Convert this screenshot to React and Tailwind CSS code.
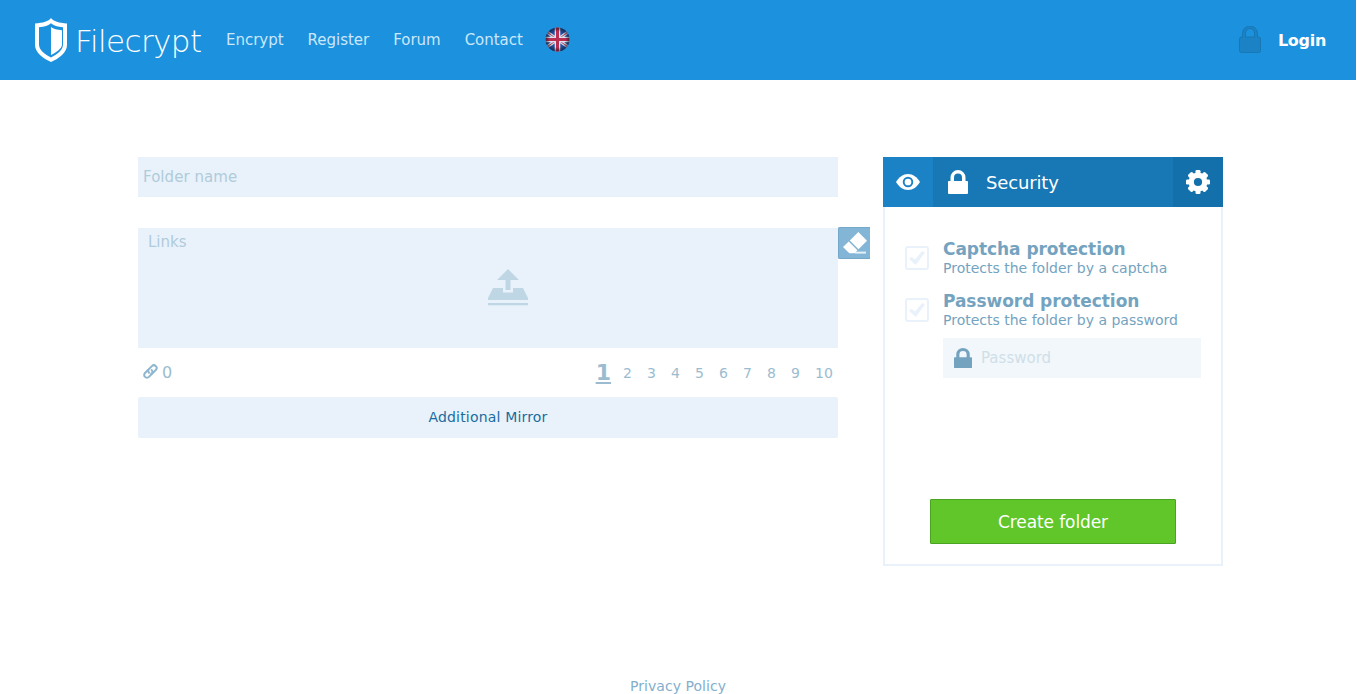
const LockIcon = ({ className }) => (
  <svg className={className} viewBox="0 0 20 24" fill="currentColor" preserveAspectRatio="none">
    <path d="M2.500 11V7.500a7.500 7.500 0 0 1 15 0V11H19.200a.8 .8 0 0 1 .8 .8V23a1 1 0 0 1-1 1H1a1 1 0 0 1-1-1V11.800a.8 .8 0 0 1 .8-.8zM6 11h8V7.500a4 4 0 0 0-8 0z" />
  </svg>
);

const ShieldLogo = () => (
  <svg className="h-[44px] w-8 shrink-0" viewBox="0 0 32 44" fill="#fff">
    <path
      fillRule="evenodd"
      d="M16 0C18.500 3.300 24 5 32 5.400V27C32 34.500 24 40.500 16 44C8 40.500 0 34.500 0 27V5.400C8 5 13.500 3.300 16 0ZM16 5.200C13.500 7.600 9.500 8.900 4 9.200V26.500C4 32 10 36.500 16 39.500C22 36.500 28 32 28 26.500V9.200C22.500 8.900 18.500 7.600 16 5.200Z"
    />
    <path d="M16 9C18.500 10.800 22 11.900 27 12.200V26.500C27 30.500 21.500 34.300 16 37Z" />
  </svg>
);

const Flag = () => (
  <svg className="h-[25px] w-[25px]" viewBox="0 0 25 25">
    <defs>
      <clipPath id="flag-disc"><circle cx="12.500" cy="12.500" r="12" /></clipPath>
      <radialGradient id="flag-shade" r=".52">
        <stop offset=".6" stopColor="#000" stopOpacity="0" />
        <stop offset="1" stopColor="#102040" stopOpacity=".75" />
      </radialGradient>
    </defs>
    <g clipPath="url(#flag-disc)">
      <path fill="#2350a0" d="M0 0h25v25H0z" />
      <path stroke="#cdd6e8" strokeWidth="3.200" d="M-1 3L26 22M-1 22L26 3" />
      <path stroke="#c23a55" strokeWidth="1" d="M-1 3L26 22M-1 22L26 3" />
      <path stroke="#dfe3ef" strokeWidth="5.600" d="M12.500 0v25M0 12.500h25" />
      <path stroke="#b92e50" strokeWidth="3" d="M12.500 0v25M0 12.500h25" />
      <path fill="url(#flag-shade)" d="M0 0h25v25H0z" />
    </g>
  </svg>
);

const Eye = () => (
  <svg className="h-4 w-6" viewBox="0 0 24 16" fill="none">
    <path fill="#fff" d="M0 8C3 3 7 0 12 0s9 3 12 8c-3 5-7 8-12 8S3 13 0 8z" />
    <circle cx="12" cy="8" r="4.300" stroke="#1b82c5" strokeWidth="1.900" />
  </svg>
);

const Gear = () => (
  <svg className="h-6 w-6" viewBox="-12 -12 24 24">
    <g fill="#fff">
      <rect x="-2.500" y="-12" width="5" height="24" rx="1.300" />
      <rect x="-12" y="-2.500" width="24" height="5" rx="1.300" />
      <rect x="-3" y="-12" width="6" height="24" rx="1.500" transform="rotate(45)" />
      <rect x="-3" y="-12" width="6" height="24" rx="1.500" transform="rotate(-45)" />
      <circle r="9.400" />
    </g>
    <circle r="4.100" fill="#1470ab" />
  </svg>
);

const Upload = () => (
  <svg className="h-[37px] w-10" viewBox="0 0 40 37" fill="#bfd7e4">
    <path d="M20 0L31 11H22.500V21H17.500V11H9z" />
    <path d="M5 19H15V23.500H25V19H35L40 29V31H0V29zM0 34h40v2.200H0z" />
  </svg>
);

const Eraser = () => (
  <svg className="h-[22px] w-6" viewBox="0 0 24 22" fill="#fff">
    <path d="M15.300 0L24 8.700L15.500 17.200L6.800 8.500zM5.700 9.600L14.400 18.300L11.500 21.200H6.300L0 15z" />
    <path d="M12 19.600h11v2H12z" opacity=".8" />
  </svg>
);

const Chain = () => (
  <svg className="h-[15px] w-[15px]" viewBox="0 0 15 15" fill="none" stroke="#8fb6cf" strokeWidth="2" strokeLinecap="round">
    <path d="M6 8.700A2.700 2.700 0 0 1 6 5L8.900 2.100a2.700 2.700 0 0 1 3.900 3.900L10 8.800a2.700 2.700 0 0 1-1.700.8" />
    <path d="M8.600 6.100a2.700 2.700 0 0 1 .2 3.900L5.900 12.900a2.700 2.700 0 0 1-3.900-3.900L4.700 6.200" />
  </svg>
);

const Option = ({ title, text }) => (
  <div className="flex h-[52px] items-start">
    <div className="mt-[7px] mr-[14px] flex h-6 w-6 items-center justify-center rounded-[3px] border-2 border-[#e9f2fa]">
      <svg className="h-4 w-4" viewBox="0 0 16 16"><path fill="#e9f2fa" d="M0 9l2.500-2.300L6 9.500L13.200 1L16 2.500L6.800 15z" /></svg>
    </div>
    <div>
      <div className="h-5 text-[17px] leading-5 font-bold tracking-[-0.05px]">{title}</div>
      <div className="text-sm leading-[18px]">{text}</div>
    </div>
  </div>
);

export default function App() {
  return (
    <div className="flex h-[694px] w-[1356px] flex-col overflow-hidden bg-white font-['DejaVu_Sans',sans-serif] whitespace-nowrap">
      <header className="flex h-20 shrink-0 items-center bg-[#1c91dd] pr-[30px] pl-[35px]">
        <ShieldLogo />
        <div className="mt-[2px] ml-[8px] w-[151px] text-[31px] leading-10 font-extralight tracking-[-0.6px] text-white">Filecrypt</div>
        <nav className="flex items-center gap-6 text-[15px] leading-5 tracking-[-0.02px] text-[#cbe7fa]">
          <a>Encrypt</a>
          <a>Register</a>
          <a>Forum</a>
          <a>Contact</a>
        </nav>
        <div className="mb-[2px] ml-[22px]"><Flag /></div>
        <div className="ml-auto flex items-center">
          <svg className="mr-[17px] mb-[2px] h-[27px] w-[22px]" viewBox="0 0 22 27" fill="#1b82c5" stroke="#1877b5">
            <path d="M3.500 11V7.500a7 7 0 0 1 15 0V11h1a2 2 0 0 1 2 2v11.500a2 2 0 0 1-2 2h-17a2 2 0 0 1-2-2V13a2 2 0 0 1 2-2zM6.500 11h9V7a4.500 4.500 0 0 0-9 0z" />
          </svg>
          <a className="mt-[2px] text-base leading-5 font-bold tracking-[-0.3px] text-white">Login</a>
        </div>
      </header>

      <main className="flex h-[488px] shrink-0 items-start pt-[77px] pl-[138px]">
        <section className="w-[700px]">
          <div className="h-10 bg-[#e9f2fa] px-[5px] text-[15px] leading-10 tracking-[0.05px] text-[#b0cbda]">Folder name</div>
          <div className="mt-[31px] flex h-[120px] flex-col bg-[#e9f2fa]">
            <div className="h-[41px] px-[10px] pt-1 text-[15px] leading-5 text-[#b0cbda]">Links</div>
            <div className="pl-[350px]"><Upload /></div>
          </div>
          <div className="flex h-[49px] items-center justify-between pr-[5px] pl-[5px] text-[#9bbcd0]">
            <div className="flex items-center gap-[4px] text-base"><span className="-mt-[3px]"><Chain /></span><span className="pt-px">0</span></div>
            <div className="flex items-center gap-[15px] text-sm tracking-[0.08px]">
              <span className="-mr-[3px] text-[22px] leading-6 font-bold underline decoration-2 underline-offset-2">1</span>
              {[2, 3, 4, 5, 6, 7, 8, 9, 10].map((n) => <span key={n}>{n}</span>)}
            </div>
          </div>
          <div className="h-[41px] rounded-[2px] bg-[#e9f2fa] text-center text-sm leading-[41px] tracking-[0.18px] text-[#196c9f]">Additional Mirror</div>
        </section>

        <button className="mt-[70px] flex h-8 w-8 items-center justify-center rounded-l-[2px] border-y border-l border-[#74a7c8] bg-[#82b5d6]">
          <Eraser />
        </button>

        <aside className="ml-[13px] flex h-[409px] w-[340px] flex-col">
          <div className="flex h-[50px] shrink-0 items-center bg-[#1877b5] text-white">
            <div className="flex h-full w-[50px] items-center justify-center bg-[#1b82c5]"><Eye /></div>
            <LockIcon className="ml-[15px] h-6 w-5" />
            <span className="mt-[2px] ml-[18px] text-lg leading-6 tracking-[-0.15px]">Security</span>
            <div className="ml-auto flex h-full w-[50px] items-center justify-center bg-[#1470ab]"><Gear /></div>
          </div>
          <div className="flex-1 border-2 border-t-0 border-[#e9f2fa] pt-8 pr-5 pl-5 text-[#74a3c0]">
            <Option title="Captcha protection" text="Protects the folder by a captcha" />
            <Option title="Password protection" text="Protects the folder by a password" />
            <div className="-mt-[5px] ml-[38px] flex h-10 w-[258px] items-center bg-[#f2f7fb] pl-[11px]">
              <LockIcon className="h-5 w-[18px]" />
              <span className="ml-[9px] text-[15px] text-[#cfdfe8]">Password</span>
            </div>
            <button className="mt-[121px] ml-[25px] h-[45px] w-[246px] rounded-[1px] border border-[#4ba324] bg-[#60c629] pt-[2px] text-[17px] tracking-[-0.1px] text-white">Create folder</button>
          </div>
        </aside>
      </main>

      <footer className="mt-[108px] text-center text-sm leading-5 tracking-[0.05px] text-[#84afcc]">Privacy Policy</footer>
    </div>
  );
}
